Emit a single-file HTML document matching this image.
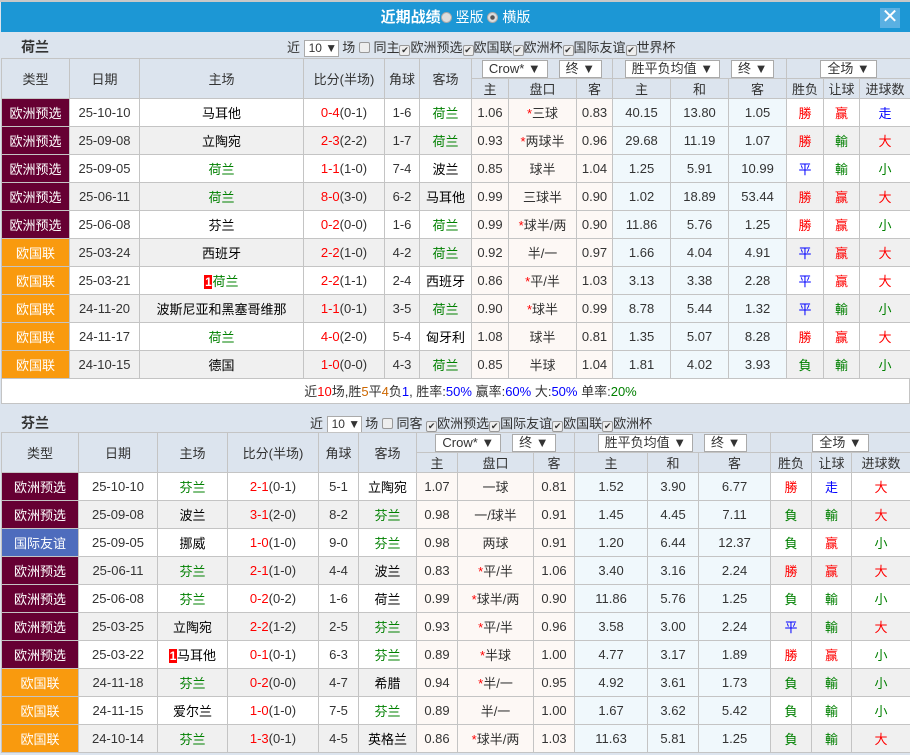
<!DOCTYPE html>
<html><head><meta charset="utf-8">
<style>
*{margin:0;padding:0;box-sizing:border-box}
body{width:910px;height:755px;overflow:hidden;background:#dce4ee;font-family:"Liberation Sans","Noto Sans CJK SC",sans-serif;font-size:13px;color:#333;position:relative}
.top{position:absolute;left:0;top:0;width:910px;height:2px;background:#c8c8c8}
.bar{position:absolute;left:1px;top:2px;width:909px;height:30px;background:#1c97d5;color:#fff;text-align:center;line-height:30px;font-size:14px}
.bar b{font-size:15px}
.rd{display:inline-block;width:11px;height:11px;border-radius:50%;background:#ddd;border:1px solid #aaa;vertical-align:-1px}
.rd.on{background:radial-gradient(#555 30%,#ddd 40%)}
.x{position:absolute;right:10px;top:6px;width:20px;height:20px;background:#5ab0e2;color:#fff;font-size:20px;line-height:19px;text-align:center}
.hd{position:absolute;left:1px;width:909px;height:26px}
.hd .t{position:absolute;left:20px;top:5px;font-weight:bold;font-size:14px}
.hd .f{position:absolute;top:5px;font-size:13px;white-space:nowrap}
.sel{display:inline-block;border:1px solid #aaa;background:#fff;width:35px;height:17px;line-height:15px;font-size:12px;padding-left:4px;vertical-align:middle}
.cb{display:inline-block;width:11px;height:11px;border:1px solid #999;background:#eee;border-radius:2px;vertical-align:-1px;font-size:9px;line-height:9px;text-align:center}
table{position:absolute;left:1px;border-collapse:collapse;table-layout:fixed;background:#fff}
td{border:1px solid #c4c4c4;text-align:center;height:28px;white-space:nowrap;overflow:hidden;font-size:13px;background:#fff}
.h td{background:#dce4ee;height:20px}
.h td.tall{height:40px}
.sb{display:inline-block;border:1px solid #aaa;background:#fff;height:18px;line-height:16px;padding:0 6px;font-size:13px}
td.A{background:#660033;color:#fff}td.B{background:#f99a0e;color:#fff}td.C{background:#4e6cbd;color:#fff}
.g{color:#008000}.r{color:#f00}.bl{color:#00f}
td.p{background:#fdf8f5}td.q{background:#f0f8fc}
tr.e td.o{background:#f0f0f0}
tr.e td.n{background:#f0f0f0}
.k{display:inline-block;background:#f00;color:#fff;font-weight:bold;width:8px;line-height:14px;font-size:12px}
.sum{position:absolute;left:1px;top:378px;width:909px;height:26px;background:#fff;border:1px solid #c4c4c4;text-align:center;line-height:26px;padding-left:30px}
</style></head><body>
<div class="top"></div>
<div class="bar"><b>近期战绩</b><span class="rd"></span> 竖版 <span class="rd on"></span> 横版<div class="x">✕</div></div>

<div class="hd" style="top:32px"><span class="t">荷兰</span>
<span class="f" style="left:286px">近 <span class="sel">10 ▼</span> 场 <span class="cb"></span> 同主<span class="cb">✔</span>欧洲预选<span class="cb">✔</span>欧国联<span class="cb">✔</span>欧洲杯<span class="cb">✔</span>国际友谊<span class="cb">✔</span>世界杯</span></div>

<table style="top:58px;width:909px">
<colgroup><col width="68"><col width="70"><col width="164"><col width="81"><col width="35"><col width="52"><col width="37"><col width="68"><col width="36"><col width="58"><col width="58"><col width="58"><col width="37"><col width="36"><col width="51"></colgroup>
<tr class="h"><td rowspan="2" class="tall">类型</td><td rowspan="2">日期</td><td rowspan="2">主场</td><td rowspan="2">比分(半场)</td><td rowspan="2">角球</td><td rowspan="2">客场</td>
<td colspan="3"><span class="sb">Crow* ▼</span> &nbsp; <span class="sb">终 ▼</span></td><td colspan="3"><span class="sb">胜平负均值 ▼</span> &nbsp; <span class="sb">终 ▼</span></td><td colspan="3"><span class="sb">全场 ▼</span></td></tr>
<tr class="h"><td>主</td><td>盘口</td><td>客</td><td>主</td><td>和</td><td>客</td><td>胜负</td><td>让球</td><td>进球数</td></tr>
<tr><td class="A">欧洲预选</td><td class="o">25-10-10</td><td class="o" style="color:#000">马耳他</td><td class="o"><span class="r">0-4</span>(0-1)</td><td class="o">1-6</td><td class="o g">荷兰</td><td class="p">1.06</td><td class="p"><span class="r">*</span>三球</td><td class="p">0.83</td><td class="q">40.15</td><td class="q">13.80</td><td class="q">1.05</td><td class="n r">勝</td><td class="n r">赢</td><td class="n bl">走</td></tr>
<tr class="e"><td class="A">欧洲预选</td><td class="o">25-09-08</td><td class="o" style="color:#000">立陶宛</td><td class="o"><span class="r">2-3</span>(2-2)</td><td class="o">1-7</td><td class="o g">荷兰</td><td class="p">0.93</td><td class="p"><span class="r">*</span>两球半</td><td class="p">0.96</td><td class="q">29.68</td><td class="q">11.19</td><td class="q">1.07</td><td class="n r">勝</td><td class="n g">輸</td><td class="n r">大</td></tr>
<tr><td class="A">欧洲预选</td><td class="o">25-09-05</td><td class="o g">荷兰</td><td class="o"><span class="r">1-1</span>(1-0)</td><td class="o">7-4</td><td class="o" style="color:#000">波兰</td><td class="p">0.85</td><td class="p">球半</td><td class="p">1.04</td><td class="q">1.25</td><td class="q">5.91</td><td class="q">10.99</td><td class="n bl">平</td><td class="n g">輸</td><td class="n g">小</td></tr>
<tr class="e"><td class="A">欧洲预选</td><td class="o">25-06-11</td><td class="o g">荷兰</td><td class="o"><span class="r">8-0</span>(3-0)</td><td class="o">6-2</td><td class="o" style="color:#000">马耳他</td><td class="p">0.99</td><td class="p">三球半</td><td class="p">0.90</td><td class="q">1.02</td><td class="q">18.89</td><td class="q">53.44</td><td class="n r">勝</td><td class="n r">赢</td><td class="n r">大</td></tr>
<tr><td class="A">欧洲预选</td><td class="o">25-06-08</td><td class="o" style="color:#000">芬兰</td><td class="o"><span class="r">0-2</span>(0-0)</td><td class="o">1-6</td><td class="o g">荷兰</td><td class="p">0.99</td><td class="p"><span class="r">*</span>球半/两</td><td class="p">0.90</td><td class="q">11.86</td><td class="q">5.76</td><td class="q">1.25</td><td class="n r">勝</td><td class="n r">赢</td><td class="n g">小</td></tr>
<tr class="e"><td class="B">欧国联</td><td class="o">25-03-24</td><td class="o" style="color:#000">西班牙</td><td class="o"><span class="r">2-2</span>(1-0)</td><td class="o">4-2</td><td class="o g">荷兰</td><td class="p">0.92</td><td class="p">半/一</td><td class="p">0.97</td><td class="q">1.66</td><td class="q">4.04</td><td class="q">4.91</td><td class="n bl">平</td><td class="n r">赢</td><td class="n r">大</td></tr>
<tr><td class="B">欧国联</td><td class="o">25-03-21</td><td class="o g"><span class="k">1</span>荷兰</td><td class="o"><span class="r">2-2</span>(1-1)</td><td class="o">2-4</td><td class="o" style="color:#000">西班牙</td><td class="p">0.86</td><td class="p"><span class="r">*</span>平/半</td><td class="p">1.03</td><td class="q">3.13</td><td class="q">3.38</td><td class="q">2.28</td><td class="n bl">平</td><td class="n r">赢</td><td class="n r">大</td></tr>
<tr class="e"><td class="B">欧国联</td><td class="o">24-11-20</td><td class="o" style="color:#000">波斯尼亚和黑塞哥维那</td><td class="o"><span class="r">1-1</span>(0-1)</td><td class="o">3-5</td><td class="o g">荷兰</td><td class="p">0.90</td><td class="p"><span class="r">*</span>球半</td><td class="p">0.99</td><td class="q">8.78</td><td class="q">5.44</td><td class="q">1.32</td><td class="n bl">平</td><td class="n g">輸</td><td class="n g">小</td></tr>
<tr><td class="B">欧国联</td><td class="o">24-11-17</td><td class="o g">荷兰</td><td class="o"><span class="r">4-0</span>(2-0)</td><td class="o">5-4</td><td class="o" style="color:#000">匈牙利</td><td class="p">1.08</td><td class="p">球半</td><td class="p">0.81</td><td class="q">1.35</td><td class="q">5.07</td><td class="q">8.28</td><td class="n r">勝</td><td class="n r">赢</td><td class="n r">大</td></tr>
<tr class="e"><td class="B">欧国联</td><td class="o">24-10-15</td><td class="o" style="color:#000">德国</td><td class="o"><span class="r">1-0</span>(0-0)</td><td class="o">4-3</td><td class="o g">荷兰</td><td class="p">0.85</td><td class="p">半球</td><td class="p">1.04</td><td class="q">1.81</td><td class="q">4.02</td><td class="q">3.93</td><td class="n g">負</td><td class="n g">輸</td><td class="n g">小</td></tr>
</table>
<div class="sum">近<span class="r">10</span>场,胜<span style="color:#c60">5</span>平<span style="color:#c60">4</span>负<span class="bl">1</span>, 胜率:<span class="bl">50%</span> 赢率:<span class="bl">60%</span> 大:<span class="bl">50%</span> 单率:<span class="g">20%</span></div>

<div class="hd" style="top:408px"><span class="t">芬兰</span>
<span class="f" style="left:309px">近 <span class="sel">10 ▼</span> 场 <span class="cb"></span> 同客 <span class="cb">✔</span>欧洲预选<span class="cb">✔</span>国际友谊<span class="cb">✔</span>欧国联<span class="cb">✔</span>欧洲杯</span></div>

<table style="top:432px;width:909px">
<colgroup><col width="77"><col width="79"><col width="70"><col width="91"><col width="40"><col width="58"><col width="41"><col width="76"><col width="41"><col width="73"><col width="51"><col width="72"><col width="41"><col width="40"><col width="59"></colgroup>
<tr class="h"><td rowspan="2" class="tall">类型</td><td rowspan="2">日期</td><td rowspan="2">主场</td><td rowspan="2">比分(半场)</td><td rowspan="2">角球</td><td rowspan="2">客场</td>
<td colspan="3"><span class="sb">Crow* ▼</span> &nbsp; <span class="sb">终 ▼</span></td><td colspan="3"><span class="sb">胜平负均值 ▼</span> &nbsp; <span class="sb">终 ▼</span></td><td colspan="3"><span class="sb">全场 ▼</span></td></tr>
<tr class="h"><td>主</td><td>盘口</td><td>客</td><td>主</td><td>和</td><td>客</td><td>胜负</td><td>让球</td><td>进球数</td></tr>
<tr><td class="A">欧洲预选</td><td class="o">25-10-10</td><td class="o g">芬兰</td><td class="o"><span class="r">2-1</span>(0-1)</td><td class="o">5-1</td><td class="o" style="color:#000">立陶宛</td><td class="p">1.07</td><td class="p">一球</td><td class="p">0.81</td><td class="q">1.52</td><td class="q">3.90</td><td class="q">6.77</td><td class="n r">勝</td><td class="n bl">走</td><td class="n r">大</td></tr>
<tr class="e"><td class="A">欧洲预选</td><td class="o">25-09-08</td><td class="o" style="color:#000">波兰</td><td class="o"><span class="r">3-1</span>(2-0)</td><td class="o">8-2</td><td class="o g">芬兰</td><td class="p">0.98</td><td class="p">一/球半</td><td class="p">0.91</td><td class="q">1.45</td><td class="q">4.45</td><td class="q">7.11</td><td class="n g">負</td><td class="n g">輸</td><td class="n r">大</td></tr>
<tr><td class="C">国际友谊</td><td class="o">25-09-05</td><td class="o" style="color:#000">挪威</td><td class="o"><span class="r">1-0</span>(1-0)</td><td class="o">9-0</td><td class="o g">芬兰</td><td class="p">0.98</td><td class="p">两球</td><td class="p">0.91</td><td class="q">1.20</td><td class="q">6.44</td><td class="q">12.37</td><td class="n g">負</td><td class="n r">赢</td><td class="n g">小</td></tr>
<tr class="e"><td class="A">欧洲预选</td><td class="o">25-06-11</td><td class="o g">芬兰</td><td class="o"><span class="r">2-1</span>(1-0)</td><td class="o">4-4</td><td class="o" style="color:#000">波兰</td><td class="p">0.83</td><td class="p"><span class="r">*</span>平/半</td><td class="p">1.06</td><td class="q">3.40</td><td class="q">3.16</td><td class="q">2.24</td><td class="n r">勝</td><td class="n r">赢</td><td class="n r">大</td></tr>
<tr><td class="A">欧洲预选</td><td class="o">25-06-08</td><td class="o g">芬兰</td><td class="o"><span class="r">0-2</span>(0-2)</td><td class="o">1-6</td><td class="o" style="color:#000">荷兰</td><td class="p">0.99</td><td class="p"><span class="r">*</span>球半/两</td><td class="p">0.90</td><td class="q">11.86</td><td class="q">5.76</td><td class="q">1.25</td><td class="n g">負</td><td class="n g">輸</td><td class="n g">小</td></tr>
<tr class="e"><td class="A">欧洲预选</td><td class="o">25-03-25</td><td class="o" style="color:#000">立陶宛</td><td class="o"><span class="r">2-2</span>(1-2)</td><td class="o">2-5</td><td class="o g">芬兰</td><td class="p">0.93</td><td class="p"><span class="r">*</span>平/半</td><td class="p">0.96</td><td class="q">3.58</td><td class="q">3.00</td><td class="q">2.24</td><td class="n bl">平</td><td class="n g">輸</td><td class="n r">大</td></tr>
<tr><td class="A">欧洲预选</td><td class="o">25-03-22</td><td class="o" style="color:#000"><span class="k">1</span>马耳他</td><td class="o"><span class="r">0-1</span>(0-1)</td><td class="o">6-3</td><td class="o g">芬兰</td><td class="p">0.89</td><td class="p"><span class="r">*</span>半球</td><td class="p">1.00</td><td class="q">4.77</td><td class="q">3.17</td><td class="q">1.89</td><td class="n r">勝</td><td class="n r">赢</td><td class="n g">小</td></tr>
<tr class="e"><td class="B">欧国联</td><td class="o">24-11-18</td><td class="o g">芬兰</td><td class="o"><span class="r">0-2</span>(0-0)</td><td class="o">4-7</td><td class="o" style="color:#000">希腊</td><td class="p">0.94</td><td class="p"><span class="r">*</span>半/一</td><td class="p">0.95</td><td class="q">4.92</td><td class="q">3.61</td><td class="q">1.73</td><td class="n g">負</td><td class="n g">輸</td><td class="n g">小</td></tr>
<tr><td class="B">欧国联</td><td class="o">24-11-15</td><td class="o" style="color:#000">爱尔兰</td><td class="o"><span class="r">1-0</span>(1-0)</td><td class="o">7-5</td><td class="o g">芬兰</td><td class="p">0.89</td><td class="p">半/一</td><td class="p">1.00</td><td class="q">1.67</td><td class="q">3.62</td><td class="q">5.42</td><td class="n g">負</td><td class="n g">輸</td><td class="n g">小</td></tr>
<tr class="e"><td class="B">欧国联</td><td class="o">24-10-14</td><td class="o g">芬兰</td><td class="o"><span class="r">1-3</span>(0-1)</td><td class="o">4-5</td><td class="o" style="color:#000">英格兰</td><td class="p">0.86</td><td class="p"><span class="r">*</span>球半/两</td><td class="p">1.03</td><td class="q">11.63</td><td class="q">5.81</td><td class="q">1.25</td><td class="n g">負</td><td class="n g">輸</td><td class="n r">大</td></tr>
</table>
</body></html>
